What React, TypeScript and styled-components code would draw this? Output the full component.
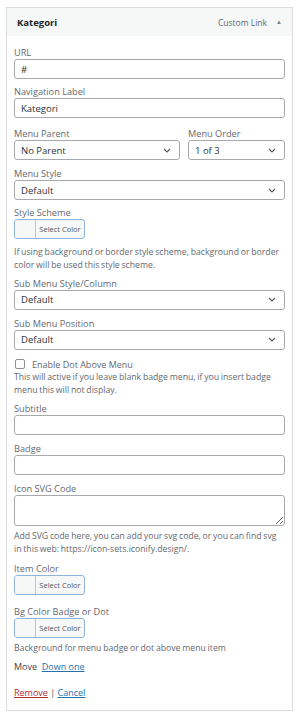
import React from "react";
import styled, { createGlobalStyle } from "styled-components";

const Global = createGlobalStyle`
  html, body { margin: 0; padding: 0; background: #fff; }
  body { font-family: "Open Sans", "Noto Sans", sans-serif; font-size: 9px; color: #3c434a; }
  * { box-sizing: border-box; }
`;

const Panel = styled.div`
  margin: 7px 7px 7px 6px;
  border: 1px solid #dcdcde;
  background: #fff;
`;

const Header = styled.div`
  height: 28px;
  background: #f6f7f7;
  display: flex;
  align-items: center;
  padding: 0 10px 0 10px;
`;

const Title = styled.div`
  flex: 1;
  font-weight: 700;
  font-size: 9.5px;
  color: #1d2327;
`;

const TypeLabel = styled.span`
  font-size: 8.5px;
  color: #646970;
  margin-right: 9px;
`;

const Arrow = styled.span`
  font-size: 6px;
  color: #787c82;
`;

const Body = styled.div`
  padding: 10px 7px 11px 7px;
  display: flex;
  flex-direction: column;
`;

const Field = styled.div<{ $mb?: number }>`
  display: flex;
  flex-direction: column;
  margin-bottom: ${(p) => (p.$mb ?? 7)}px;
`;

const Row = styled.div`
  display: flex;
  gap: 8px;
`;

const Label = styled.label`
  display: block;
  line-height: 13px;
  font-size: 9.2px;
  color: #646970;
`;

const TextInput = styled.div`
  height: 20px;
  border: 1px solid #a7aaad;
  border-radius: 3px;
  padding: 0 6px;
  display: flex;
  align-items: center;
  font-size: 9.5px;
  color: #2c3338;
`;

const SelectBox = styled(TextInput)`
  justify-content: space-between;
  padding-right: 8px;
`;

const TextArea = styled.textarea`
  height: 31px;
  border: 1px solid #a7aaad;
  border-radius: 3px;
  resize: vertical;
  font: inherit;
  display: block;
  width: 100%;
`;

const ColorButton = styled.div`
  width: 71px;
  height: 20px;
  border: 1px solid #8fb4d9;
  border-radius: 3px;
  display: flex;
  background: #f6f7f7;
  overflow: hidden;
`;

const Swatch = styled.span`
  width: 21px;
  border-right: 1px solid #c3c4c7;
  background: #f6f7f7;
`;

const ColorText = styled.span`
  flex: 1;
  display: flex;
  align-items: center;
  justify-content: center;
  font-size: 7.5px;
  color: #50575e;
`;

const Help = styled.p<{ $mt?: number; $mb?: number }>`
  margin: ${(p) => p.$mt ?? 7}px 0 ${(p) => p.$mb ?? 4}px 0;
  line-height: 13.3px;
  font-size: 8.7px;
  word-spacing: -0.5px;
  color: #646970;
`;

const CheckRow = styled.div`
  display: flex;
  align-items: center;
  line-height: 13px;
  margin-top: 8px;
  color: #646970;
`;

const CheckBox = styled.span`
  width: 10px;
  height: 10px;
  border: 1px solid #8c8f94;
  border-radius: 2px;
  margin: 0 7px 0 1px;
`;

const MoveRow = styled.div`
  line-height: 13px;
  margin-top: 5px;
  color: #3c434a;
`;

const Link = styled.a<{ $danger?: boolean }>`
  color: ${(p) => (p.$danger ? "#b32d2e" : "#2271b1")};
  text-decoration: underline;
`;

const Actions = styled.div`
  line-height: 13px;
  margin-top: 13px;
  color: #50575e;
`;

const Chevron = () => (
  <svg width="8" height="5" viewBox="0 0 8 5">
    <polyline points="1,1 4,4 7,1" fill="none" stroke="#50575e" strokeWidth="1.1" />
  </svg>
);

const Select = ({ value }: { value: string }) => (
  <SelectBox>
    <span>{value}</span>
    <Chevron />
  </SelectBox>
);

const Color = () => (
  <ColorButton>
    <Swatch />
    <ColorText>Select Color</ColorText>
  </ColorButton>
);

export default function App() {
  return (
    <>
      <Global />
      <Panel>
        <Header>
          <Title>Kategori</Title>
          <TypeLabel>Custom Link</TypeLabel>
          <Arrow>▲</Arrow>
        </Header>
        <Body>
          <Field $mb={6}>
            <Label>URL</Label>
            <TextInput>#</TextInput>
          </Field>
          <Field $mb={9}>
            <Label>Navigation Label</Label>
            <TextInput>Kategori</TextInput>
          </Field>
          <Row>
            <Field style={{ flex: 1 }}>
              <Label>Menu Parent</Label>
              <Select value="No Parent" />
            </Field>
            <Field style={{ width: 97 }}>
              <Label>Menu Order</Label>
              <Select value="1 of 3" />
            </Field>
          </Row>
          <Field $mb={0}>
            <Label>Menu Style</Label>
            <Select value="Default" />
          </Field>
          <Field $mb={0} style={{ marginTop: 6 }}>
            <Label>Style Scheme</Label>
            <Color />
          </Field>
          <Help>
            If using background or border style scheme, background or border color will be used this style scheme.
          </Help>
          <Field>
            <Label>Sub Menu Style/Column</Label>
            <Select value="Default" />
          </Field>
          <Field $mb={0}>
            <Label>Sub Menu Position</Label>
            <Select value="Default" />
          </Field>
          <CheckRow>
            <CheckBox />
            Enable Dot Above Menu
          </CheckRow>
          <Help $mt={0} $mb={5}>
            This will active if you leave blank badge menu, if you insert badge menu this will not display.
          </Help>
          <Field>
            <Label>Subtitle</Label>
            <TextInput />
          </Field>
          <Field>
            <Label>Badge</Label>
            <TextInput />
          </Field>
          <Field $mb={0}>
            <Label>Icon SVG Code</Label>
            <TextArea readOnly />
          </Field>
          <Help $mt={4} $mb={5}>
            Add SVG code here, you can add your svg code, or you can find svg in this web: https://icon-sets.iconify.design/.
          </Help>
          <Field $mb={10}>
            <Label>Item Color</Label>
            <Color />
          </Field>
          <Field $mb={0}>
            <Label>Bg Color Badge or Dot</Label>
            <Color />
          </Field>
          <Help $mt={4} $mb={0}>
            Background for menu badge or dot above menu item
          </Help>
          <MoveRow>
            Move&nbsp; <Link href="#">Down one</Link>
          </MoveRow>
          <Actions>
            <Link href="#" $danger>Remove</Link> | <Link href="#">Cancel</Link>
          </Actions>
        </Body>
      </Panel>
    </>
  );
}
